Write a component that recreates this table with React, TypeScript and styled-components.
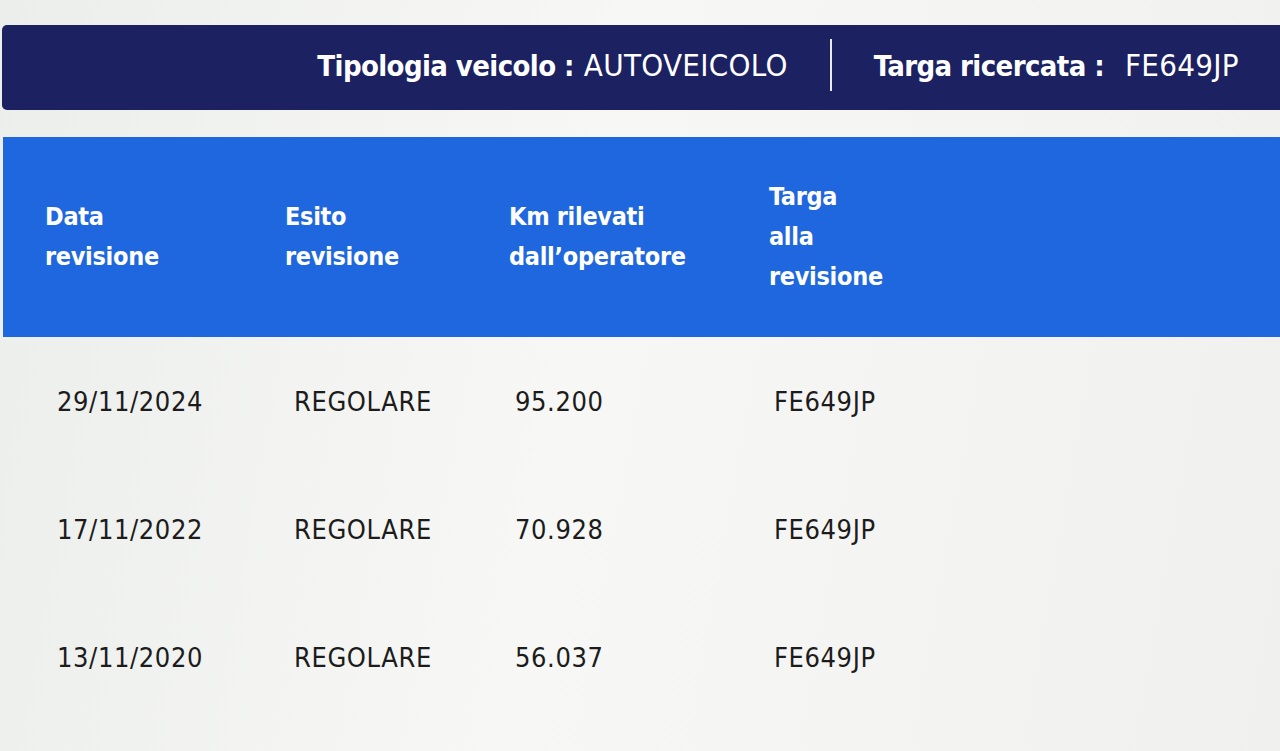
import React from "react";
import styled, { createGlobalStyle } from "styled-components";

const GlobalStyle = createGlobalStyle`
  html, body {
    margin: 0;
    padding: 0;
    background: #f3f4f2;
  }
  body {
    font-family: "DejaVu Sans Condensed", "Liberation Sans Narrow", Roboto, "Liberation Sans", sans-serif;
  }
`;

const Page = styled.div`
  display: flex;
  flex-direction: column;
  padding-top: 25px;
  width: 1280px;
  height: 751px;
  overflow: hidden;
  background: linear-gradient(100deg, #eceeec 0%, #f7f8f6 45%, #f0f1ef 100%);
`;

const InfoBar = styled.div`
  display: flex;
  align-items: center;
  justify-content: flex-end;
  height: 85px;
  margin-left: 2px;
  padding-right: 41px;
  padding-bottom: 5px;
  box-sizing: border-box;
  background: #1c2162;
  border-radius: 5px 0 0 5px;
  color: #ffffff;
`;

const InfoItem = styled.div<{ $gap: number }>`
  display: flex;
  align-items: baseline;
  gap: ${(p) => p.$gap}px;
  white-space: nowrap;
`;

const InfoLabel = styled.span`
  font-weight: 700;
  font-size: 29px;
  letter-spacing: -0.6px;
`;

const InfoValue = styled.span`
  font-weight: 400;
  font-size: 31px;
  letter-spacing: 0.3px;
`;

const Divider = styled.div`
  width: 2px;
  height: 52px;
  background: #e9ebf3;
  margin: 0 42px;
`;

const Table = styled.div`
  display: flex;
  flex-direction: column;
  margin-top: 27px;
  margin-left: 3px;
`;

const HeaderRow = styled.div`
  display: grid;
  grid-template-columns: 240px 224px 260px 1fr;
  align-items: center;
  height: 200px;
  padding-left: 42px;
  background: #1f67df;
`;

const HeaderCell = styled.div`
  color: #ffffff;
  font-weight: 700;
  font-size: 25px;
  letter-spacing: -0.3px;
  line-height: 40px;
`;

const BodyRow = styled.div`
  display: grid;
  grid-template-columns: 237px 221px 259px 1fr;
  align-items: center;
  height: 128px;
  padding-left: 54px;
`;

const BodyCell = styled.div`
  color: #1c1c1c;
  font-weight: 400;
  font-size: 27px;
  letter-spacing: 0.6px;
`;

const rows = [
  { date: "29/11/2024", esito: "REGOLARE", km: "95.200", targa: "FE649JP" },
  { date: "17/11/2022", esito: "REGOLARE", km: "70.928", targa: "FE649JP" },
  { date: "13/11/2020", esito: "REGOLARE", km: "56.037", targa: "FE649JP" },
];

export default function App() {
  return (
    <>
      <GlobalStyle />
      <Page>
        <InfoBar>
          <InfoItem $gap={10}>
            <InfoLabel>Tipologia veicolo :</InfoLabel>
            <InfoValue>AUTOVEICOLO</InfoValue>
          </InfoItem>
          <Divider />
          <InfoItem $gap={21}>
            <InfoLabel>Targa ricercata :</InfoLabel>
            <InfoValue>FE649JP</InfoValue>
          </InfoItem>
        </InfoBar>
        <Table>
          <HeaderRow>
            <HeaderCell>
              Data
              <br />
              revisione
            </HeaderCell>
            <HeaderCell>
              Esito
              <br />
              revisione
            </HeaderCell>
            <HeaderCell>
              Km rilevati
              <br />
              dall’operatore
            </HeaderCell>
            <HeaderCell>
              Targa
              <br />
              alla
              <br />
              revisione
            </HeaderCell>
          </HeaderRow>
          {rows.map((r) => (
            <BodyRow key={r.date}>
              <BodyCell>{r.date}</BodyCell>
              <BodyCell>{r.esito}</BodyCell>
              <BodyCell>{r.km}</BodyCell>
              <BodyCell>{r.targa}</BodyCell>
            </BodyRow>
          ))}
        </Table>
      </Page>
    </>
  );
}
